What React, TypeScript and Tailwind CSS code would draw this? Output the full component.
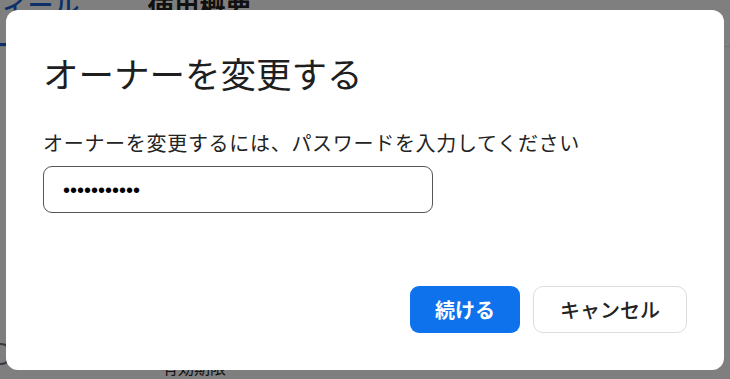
import React from "react";

const font = {
  fontFamily: '"Noto Sans CJK JP", "Noto Sans", sans-serif',
};

function PageBehind() {
  return (
    <div className="h-[379px] w-[730px] overflow-hidden bg-white" style={font}>
      {/* Tabs */}
      <div className="-mt-[16px] flex items-end gap-[68px] border-b border-gray-200">
        <div className="-ml-[24px] border-b-[3px] border-[#1a5fd0] pb-[20px] text-[26px] font-medium text-[#1a5fd0]">
          フィール
        </div>
        <div className="pb-[20px] text-[26px] font-bold text-[#222]">使用概要</div>
      </div>
      <div className="mt-[282px] flex items-center gap-[150px] pl-[0px]">
        <div className="-ml-[10px] h-[22px] w-[22px] rounded-full border-2 border-gray-500" />
        <div className="mt-[26px] text-[16px] text-[#222]">有効期限 ・ ・ ・</div>
      </div>
    </div>
  );
}

function OwnerDialog() {
  return (
    <div className="fixed inset-0 bg-black/50 pl-[6px] pt-[10px]">
      <div
        className="flex h-[360px] w-[718px] flex-col rounded-[12px] bg-white px-[37px] pb-[37px] pt-[42px]"
        style={font}
      >
        <h2 className="text-[35.5px] leading-[41px] font-normal text-[#1e1e1e]">
          オーナーを変更する
        </h2>
        <label className="mt-[36px] text-[20px] leading-[28px] tracking-[0.7px] text-[#232323]">
          オーナーを変更するには、パスワードを入力してください
        </label>
        <div className="mt-[9px] flex h-[47px] w-[390px] items-center rounded-[9px] border border-[#555] px-[19px]">
          <span
            className="text-[20px] leading-none text-black"
            style={{ fontFamily: '"Liberation Sans", sans-serif' }}
          >
            •••••••••••
          </span>
        </div>
        <div className="mt-auto flex justify-end gap-[13px]">
          <button className="h-[47px] w-[110px] rounded-[9px] bg-[#0e72ed] text-[20px] font-bold text-white">
            続ける
          </button>
          <button className="h-[47px] w-[154px] rounded-[10px] border border-[#dcdde0] bg-white text-[20px] font-medium text-[#222]">
            キャンセル
          </button>
        </div>
      </div>
    </div>
  );
}

export default function App() {
  return (
    <div className="relative">
      <PageBehind />
      <OwnerDialog />
    </div>
  );
}
